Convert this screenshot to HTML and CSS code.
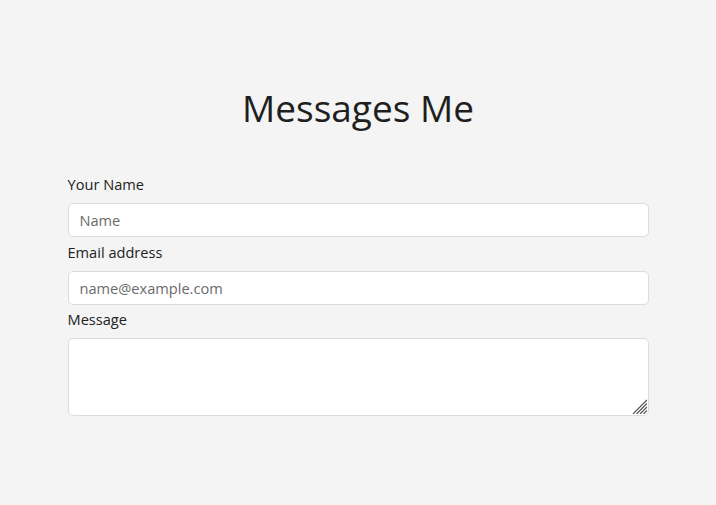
FILE: index.html
```html
<!DOCTYPE html>
<html lang="en">
<head>
<meta charset="utf-8">
<title>Messages Me</title>
<link rel="stylesheet" href="styles.css">
</head>
<body>
<main class="page">
  <h1 class="title">Messages Me</h1>
  <form class="form">
    <div class="group">
      <label class="label" for="name">Your Name</label>
      <input class="control" id="name" type="text" placeholder="Name">
    </div>
    <div class="group">
      <label class="label" for="email">Email address</label>
      <input class="control" id="email" type="email" placeholder="name@example.com">
    </div>
    <div class="group">
      <label class="label" for="msg">Message</label>
      <div class="area-wrap">
        <textarea class="control area" id="msg"></textarea>
        <svg class="grip" width="15" height="15" viewBox="0 0 15 15" aria-hidden="true">
          <path d="M1 15L15 1M4.5 15L15 4.5M8 15L15 8M11.5 15L15 11.5" stroke="#4a4a4a" stroke-width="1.1" fill="none"/>
        </svg>
      </div>
    </div>
  </form>
</main>
</body>
</html>
```

FILE: styles.css
```css
* { box-sizing: border-box; }
html, body {
  margin: 0;
  padding: 0;
  background: #f4f4f4;
  font-family: "Open Sans", "Liberation Sans", sans-serif;
  color: #212529;
}
.page {
  width: 581px;
  margin: 0 auto;
  padding-top: 86px;
}
.title {
  margin: 0 0 44px;
  text-align: center;
  font-weight: 400;
  font-size: 37px;
  line-height: 44px;
  color: #1f1f1f;
}
.form {
  display: flex;
  flex-direction: column;
  gap: 4.5px;
}
.group {
  display: flex;
  flex-direction: column;
}
.label {
  font-size: 14.6px;
  line-height: 21px;
  margin-bottom: 8px;
  color: #222;
}
.control {
  display: block;
  width: 100%;
  height: 34px;
  padding: 6px 11px;
  font-family: inherit;
  font-size: 14.6px;
  line-height: 20px;
  color: #212529;
  background: #fff;
  border: 1px solid #dcdcdc;
  border-radius: 5px;
  outline: none;
}
.control::placeholder { color: #6a6a6a; }
.area-wrap {
  position: relative;
}
.area {
  height: 78px;
  resize: none;
}
.grip {
  position: absolute;
  right: 2px;
  bottom: 2px;
  pointer-events: none;
}
```
